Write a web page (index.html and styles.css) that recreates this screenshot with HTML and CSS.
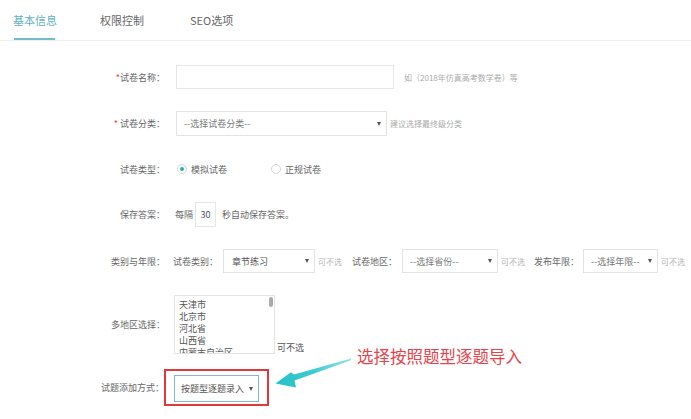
FILE: index.html
```html
<!DOCTYPE html>
<html lang="zh">
<head>
<meta charset="utf-8">
<title>试卷</title>
<link rel="stylesheet" href="styles.css">
</head>
<body>
<div class="page">
  <nav class="tabs">
    <div class="tab tab--active">基本信息</div>
    <div class="tab">权限控制</div>
    <div class="tab">SEO选项</div>
  </nav>

  <form class="form">
    <div class="row row--1">
      <div class="label"><span class="req">*</span>试卷名称：</div>
      <div class="input input--name"></div>
      <span class="hint hint--name">如（2018年仿真高考数学卷）等</span>
    </div>

    <div class="row row--2">
      <div class="label"><span class="req">*</span> 试卷分类：</div>
      <div class="select select--cat"><span>--选择试卷分类--</span><i class="caret"></i></div>
      <span class="hint hint--cat">建议选择最终级分类</span>
    </div>

    <div class="row row--3">
      <div class="label">试卷类型：</div>
      <label class="radio"><span class="dot dot--on"></span>模拟试卷</label>
      <label class="radio radio--2"><span class="dot"></span>正规试卷</label>
    </div>

    <div class="row row--4">
      <div class="label">保存答案：</div>
      <span class="text text--every">每隔</span>
      <div class="input input--sec">30</div>
      <span class="text">秒自动保存答案。</span>
    </div>

    <div class="row row--5">
      <div class="label">类别与年限：</div>
      <span class="text sublabel">试卷类别：</span>
      <div class="select select--s1"><span class="dark">章节练习</span><i class="caret"></i></div>
      <span class="hint hint--opt">可不选</span>
      <span class="text sublabel sublabel--2">试卷地区：</span>
      <div class="select select--s2"><span>--选择省份--</span><i class="caret"></i></div>
      <span class="hint hint--opt">可不选</span>
      <span class="text sublabel sublabel--3">发布年限：</span>
      <div class="select select--s3"><span>--选择年限--</span><i class="caret"></i></div>
      <span class="hint hint--opt">可不选</span>
    </div>

    <div class="row row--6">
      <div class="label">多地区选择：</div>
      <div class="multi">
        <div class="multi-item">天津市</div>
        <div class="multi-item">北京市</div>
        <div class="multi-item">河北省</div>
        <div class="multi-item">山西省</div>
        <div class="multi-item">内蒙古自治区</div>
        <span class="thumb"></span>
      </div>
      <span class="text text--multi">可不选</span>
    </div>

    <div class="row row--7">
      <div class="label label--7">试题添加方式：</div>
      <div class="mark">
        <div class="select select--add"><span class="dark">按题型逐题录入</span><i class="caret"></i></div>
      </div>
    </div>
  </form>

  <div class="note">选择按照题型逐题导入</div>
  <svg class="arrow" width="691" height="419" viewBox="0 0 691 419" aria-hidden="true">
    <defs>
      <linearGradient id="ag" x1="350" y1="359" x2="276" y2="383" gradientUnits="userSpaceOnUse">
        <stop offset="0" stop-color="#8fe3e6"/>
        <stop offset="0.5" stop-color="#3ccbd2"/>
        <stop offset="1" stop-color="#26c0c8"/>
      </linearGradient>
    </defs>
    <polygon fill="url(#ag)" points="351,358.4 294,374.6 291,372.2 275.5,383.5 296,387.6 294.6,380.6 351,360.2"/>
  </svg>
</div>
</body>
</html>
```

FILE: styles.css
```css
* { box-sizing: border-box; }

html, body {
  margin: 0;
  padding: 0;
  background: #fff;
}

body {
  font-family: "Noto Sans CJK SC", "Noto Sans", sans-serif;
  font-size: 9px;
  color: #666;
}

.page {
  position: relative;
  width: 691px;
  height: 419px;
  overflow: hidden;
}

/* tabs */
.tabs {
  display: flex;
  height: 41px;
  border-bottom: 1px solid #eef0f0;
  padding-left: 13px;
}

.tab {
  position: relative;
  font-size: 11px;
  line-height: 14px;
  padding-top: 13px;
  height: 40px;
  color: #666;
  margin-right: 46px;
}

.tab--active {
  color: #5fb0c2;
  margin-right: 43px;
}

.tab--active::after {
  content: "";
  position: absolute;
  left: 1px;
  right: 2px;
  bottom: 0;
  height: 2px;
  background: #74bccb;
}

/* form */
.form {
  display: flex;
  flex-direction: column;
  gap: 22px;
  padding-top: 24px;
}

.row {
  display: flex;
  align-items: center;
}

.label {
  width: 165px;
  flex: none;
  text-align: right;
  color: #666;
  margin-right: 11px;
  white-space: nowrap;
}

.req { color: #e04040; }

.input {
  border: 1px solid #e6e6e6;
  background: #fff;
}

.input--name {
  width: 218px;
  height: 24px;
}

.hint {
  color: #aaa;
  font-size: 8px;
  white-space: nowrap;
}

.hint--name { margin-left: 10px; }
.hint--cat { margin-left: 3px; }

.select {
  display: flex;
  align-items: center;
  justify-content: space-between;
  border: 1px solid #e3e3e3;
  background: #fff;
  color: #777;
  padding: 0 5px 0 7px;
  white-space: nowrap;
}

.select .dark { color: #555; }

.caret {
  width: 0;
  height: 0;
  border-left: 2.5px solid transparent;
  border-right: 2.5px solid transparent;
  border-top: 4px solid #555;
}

.select--cat {
  width: 211px;
  height: 25px;
}

.row--3 { height: 22px; }
.row--3 .label { margin-right: 12px; }

.radio {
  display: flex;
  align-items: center;
  color: #666;
}

.radio--2 { margin-left: 44px; }

.dot {
  width: 10px;
  height: 10px;
  border: 1px solid #d6d6d6;
  border-radius: 50%;
  margin-right: 4px;
  position: relative;
}

.dot--on::after {
  content: "";
  position: absolute;
  left: 2px;
  top: 2px;
  width: 4px;
  height: 4px;
  border-radius: 50%;
  background: #26b3a6;
}

.row--4 { height: 25px; }
.row--4 .label { margin-right: 10px; }

.text { white-space: nowrap; color: #666; }

.text--every { margin-right: 2px; }

.input--sec {
  width: 21px;
  height: 25px;
  line-height: 23px;
  text-align: center;
  color: #555;
  margin-right: 6px;
}

.row--5 { height: 24px; }
.row--5 .label { margin-right: 8px; }

.sublabel { margin-right: 5px; }
.sublabel--2 { margin-left: 10px; margin-right: 5px; }
.sublabel--3 { margin-left: 9px; margin-right: 4px; }

.select--s1 { width: 92px; height: 24px; padding-left: 8px; }
.select--s2 { width: 96px; height: 24px; }
.select--s3 { width: 75px; height: 24px; }

.hint--opt { margin-left: 3px; font-size: 8px; color: #b5b5b5; }

.row--6 { height: 59px; }
.row--6 .label { margin-right: 9px; }

.multi {
  position: relative;
  width: 101px;
  height: 59px;
  border: 1px solid #e3e3e3;
  overflow: hidden;
  padding: 3px 0 0 4px;
}

.multi-item {
  font-size: 9px;
  line-height: 12px;
  color: #555;
  white-space: nowrap;
}

.thumb {
  position: absolute;
  right: 1px;
  top: 1px;
  width: 4px;
  height: 10px;
  border-radius: 2px;
  background: #aaa;
}

.text--multi {
  align-self: flex-end;
  margin-left: 2px;
  color: #555;
}

.row--7 { margin-top: -7px; }

.label--7 { width: 164px; margin-right: 0; }

.mark {
  border: 2px solid #e2373c;
  padding: 4px 8px 2px 8px;
}

.select--add {
  width: 85px;
  height: 27px;
  border-color: #7fbcc4;
  padding-left: 6px;
  padding-right: 5px;
}

/* annotation overlay */
.note {
  position: absolute;
  left: 357px;
  top: 345px;
  font-size: 16.5px;
  line-height: 22px;
  color: #e8434b;
  white-space: nowrap;
}

.arrow {
  position: absolute;
  left: 0;
  top: 0;
  pointer-events: none;
}
```
